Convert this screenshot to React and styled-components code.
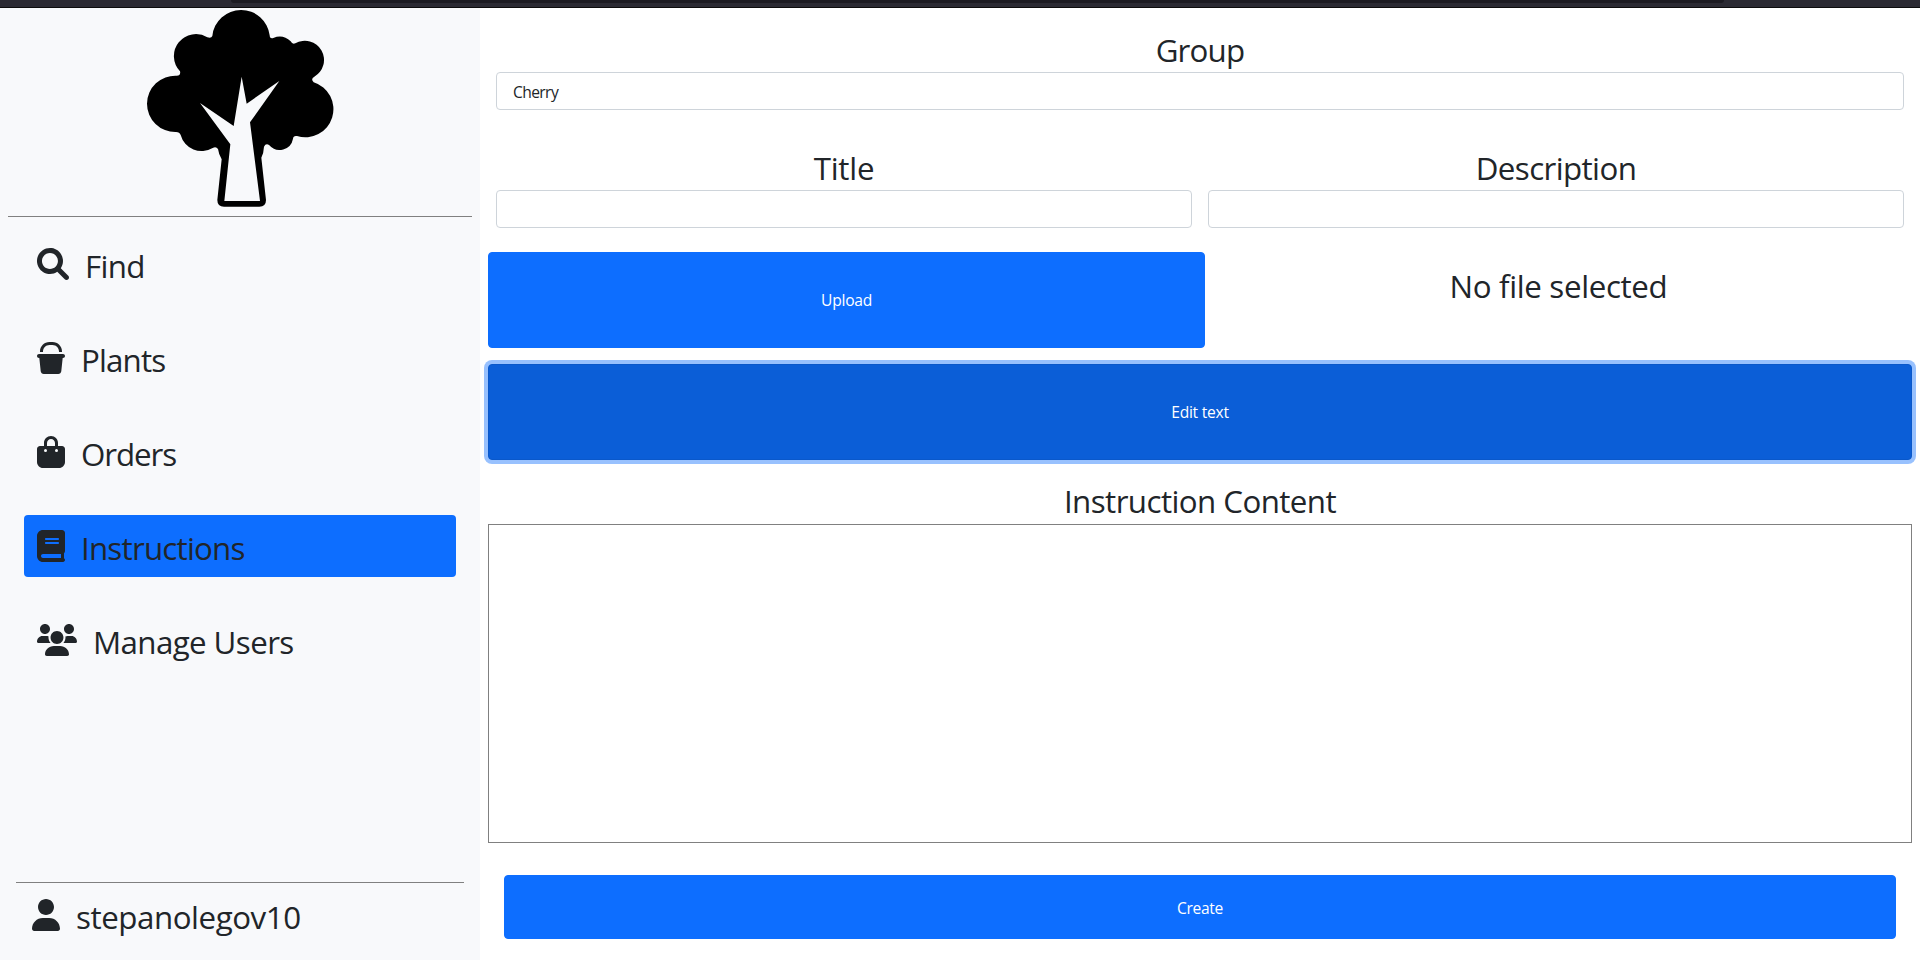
import React from "react";
import styled, { createGlobalStyle, css } from "styled-components";
import { FaBucket, FaBagShopping } from "react-icons/fa6";

const GlobalStyle = createGlobalStyle`
  *, *::before, *::after { box-sizing: border-box; }
  body {
    margin: 0;
    background: #fff;
    color: #212529;
    font-family: "Segoe UI", "Open Sans", "Noto Sans", sans-serif;
    font-size: 16px;
    line-height: 24px;
  }
`;

const Page = styled.div`
  display: flex;
  flex-direction: column;
  height: 960px;
  overflow: hidden;
`;

const BrowserEdge = styled.div`
  flex: none;
  height: 8px;
  padding: 0 196px 0 231px;
  background: #2b2a33;
  border-bottom: 1px solid #0c0c0d;
`;

const AddressBar = styled.div`
  height: 3px;
  background: #1c1b22;
  border-radius: 0 0 3px 3px;
`;

const Columns = styled.div`
  display: flex;
  flex: 1;
  min-height: 0;
`;

const Sidebar = styled.aside`
  display: flex;
  flex-direction: column;
  flex: none;
  width: 480px;
  background: #f8f9fb;
`;

const LogoArea = styled.div`
  display: flex;
  justify-content: center;
  height: 209px;
  margin: 0 8px;
  border-bottom: 1px solid #808080;
`;

const Nav = styled.nav`
  display: flex;
  flex-direction: column;
  gap: 32px;
  padding: 16px 24px;
`;

const NavItem = styled.a`
  display: flex;
  gap: 16px;
  height: 62px;
  padding: 15px 13px 0;
  border-radius: 4px;
  background: ${(p) => (p.$active ? "#0d6eff" : "transparent")};
`;

const IconBox = styled.span`
  flex: none;
  width: ${(p) => p.$width}px;
  height: 32px;

  svg {
    display: block;
    width: 100%;
    height: 100%;
  }
`;

const Label = styled.span`
  font-size: 31.3px;
  line-height: 36px;
  white-space: nowrap;
  letter-spacing: ${(p) => p.$tracking || 0}px;
`;

const UserBar = styled.footer`
  display: flex;
  gap: 16px;
  height: 78px;
  margin: auto 16px 0;
  padding: 16px 16px 0;
  border-top: 1px solid #808080;
`;

const Main = styled.main`
  display: flex;
  flex-direction: column;
  flex: 1;
  padding: 16px 8px 21px;
`;

const FieldRow = styled.div`
  display: flex;
  gap: 16px;
  padding: 0 8px;
  margin-bottom: ${(p) => p.$after}px;
`;

const Field = styled.label`
  display: flex;
  flex-direction: column;
  flex: 1;
`;

const Heading = styled.span`
  flex: none;
  height: 48px;
  padding-top: 6px;
  font-size: 31.3px;
  line-height: 40px;
  text-align: center;
  white-space: nowrap;
  letter-spacing: ${(p) => p.$tracking || 0}px;
`;

const SectionHeading = styled(Heading)`
  margin-top: 16px;
  padding-top: 5px;
`;

const Input = styled.input`
  width: 100%;
  height: 38px;
  padding: 8px 16px 6px;
  border: 1px solid #ced4da;
  border-radius: 4px;
  background: #fff;
  color: #212529;
  font: inherit;
  font-size: 15.6px;
  letter-spacing: -0.6px;
  outline: none;
`;

const Button = styled.button`
  flex: none;
  height: 96px;
  width: ${(p) => p.$width || "auto"};
  padding: 0;
  border: 1px solid #0d6eff;
  border-radius: 4px;
  background: #0d6eff;
  color: #fff;
  font: inherit;
  font-size: 15.6px;
  letter-spacing: -0.25px;
  ${(p) =>
    p.$focused &&
    css`
      border-color: #0a58ca;
      background: #0b5ed7;
      box-shadow: 0 0 0 4px #98c1fe;
    `}
`;

const SubmitButton = styled(Button)`
  height: 64px;
  padding-top: 1px;
  letter-spacing: -0.35px;
`;

const UploadRow = styled.div`
  display: flex;
  margin-bottom: 16px;
`;

const FileStatus = styled.div`
  display: flex;
  flex-direction: column;
  flex: 1;
  padding-top: 8px;
`;

const Content = styled.div`
  flex: none;
  height: 319px;
  margin-bottom: 32px;
  border: 1px solid #808080;
  background: #fff;
`;

const Actions = styled.div`
  display: flex;
  flex-direction: column;
  padding: 0 16px;
`;

const TreeLogo = () => (
  <svg width="200" height="200" viewBox="30 24 600 600">
    <path d="M247 108A86 86 0 0 1 333 30A86 86 0 0 1 419 106Q419 117 430 114Q459 102 482 124Q487 134 496 130A57 57 0 0 1 553 230Q541 237 551 247A83 83 0 0 1 501 408Q490 406 489 416A41 41 0 0 1 418 436Q408 428 402 440Q401 460 394 473L408 600Q408 620 388 620L282 620Q262 620 262 600L275 478Q266 462 264 447Q258 438 248 444A65 65 0 0 1 152 405Q149 396 138 396A85 85 0 0 1 51 311A85 85 0 0 1 140 227Q153 227 150 214A66 66 0 0 1 232 112Q244 116 247 108Z" />
    <path
      fill="#f8f9fb"
      d="M283 603L301 433L210 309L311 378L335 230L350 311L448 243L360 367L390 603Z"
    />
  </svg>
);

const SearchIcon = () => (
  <svg viewBox="0 0 512 512" fill="currentColor">
    <path d="M500.3 443.7l-119.7-119.7c27.22-40.41 40.65-90.9 33.46-144.7C401.8 87.79 326.8 13.32 235.2 1.723C99.01-15.51-15.51 99.01 1.724 235.2c11.6 91.64 86.08 166.7 177.6 178.9c53.8 7.189 104.3-6.236 144.7-33.46l119.7 119.7c15.62 15.62 40.95 15.62 56.57 0C515.9 484.7 515.9 459.3 500.3 443.7zM79.1 208c0-70.58 57.42-128 128-128s128 57.42 128 128c0 70.58-57.42 128-128 128S79.1 278.6 79.1 208z" />
  </svg>
);

const BookIcon = () => (
  <svg viewBox="0 0 448 512" fill="currentColor">
    <path d="M448 336v-288C448 21.49 426.5 0 400 0H96C42.98 0 0 42.98 0 96v320c0 53.02 42.98 96 96 96h320c17.67 0 32-14.33 32-31.1c0-11.72-6.607-21.52-16-27.1v-81.36C441.8 362.8 448 350.3 448 336zM143.1 128h192C344.8 128 352 135.2 352 144C352 152.8 344.8 160 336 160H143.1C135.2 160 128 152.8 128 144C128 135.2 135.2 128 143.1 128zM143.1 192h192C344.8 192 352 199.2 352 208C352 216.8 344.8 224 336 224H143.1C135.2 224 128 216.8 128 208C128 199.2 135.2 192 143.1 192zM384 448H96c-17.67 0-32-14.33-32-32c0-17.67 14.33-32 32-32h288V448z" />
  </svg>
);

const UsersIcon = () => (
  <svg viewBox="0 0 640 512" fill="currentColor">
    <path d="M319.9 320c57.41 0 103.1-46.56 103.1-104c0-57.44-46.54-104-103.1-104c-57.41 0-103.1 46.56-103.1 104C215.9 273.4 262.5 320 319.9 320zM369.9 352H270.1C191.6 352 128 411.7 128 485.3C128 500.1 140.7 512 156.4 512h327.2C499.3 512 512 500.1 512 485.3C512 411.7 448.4 352 369.9 352zM512 160c44.18 0 80-35.82 80-80S556.2 0 512 0c-44.18 0-80 35.82-80 80S467.8 160 512 160zM183.9 216c0-5.449 .9824-10.63 1.609-15.91C174.6 194.1 162.6 192 149.9 192H88.08C39.44 192 0 233.8 0 285.3C0 295.6 7.887 304 17.62 304h199.5C196.7 280.2 183.9 249.7 183.9 216zM128 160c44.18 0 80-35.82 80-80S172.2 0 128 0C83.82 0 48 35.82 48 80S83.82 160 128 160zM551.9 192h-61.84c-12.8 0-24.88 3.037-35.86 8.24C454.8 205.5 455.8 210.6 455.8 216c0 33.71-12.78 64.21-33.16 88h199.7C632.1 304 640 295.6 640 285.3C640 233.8 600.6 192 551.9 192z" />
  </svg>
);

const UserIcon = () => (
  <svg viewBox="0 0 448 512" fill="currentColor">
    <path d="M224 256c70.7 0 128-57.31 128-128s-57.3-128-128-128C153.3 0 96 57.31 96 128S153.3 256 224 256zM274.7 304H173.3C77.61 304 0 381.6 0 477.3c0 19.14 15.52 34.67 34.66 34.67h378.7C432.5 512 448 496.5 448 477.3C448 381.6 370.4 304 274.7 304z" />
  </svg>
);

const navItems = [
  { label: "Find", icon: SearchIcon, width: 32, tracking: -0.7 },
  { label: "Plants", icon: FaBucket, width: 28, tracking: -0.85 },
  { label: "Orders", icon: FaBagShopping, width: 28, tracking: -1.1 },
  { label: "Instructions", icon: BookIcon, width: 28, tracking: -0.78 },
  { label: "Manage Users", icon: UsersIcon, width: 40, tracking: -0.6 },
];

export default function App() {
  return (
    <Page>
      <GlobalStyle />
      <BrowserEdge>
        <AddressBar />
      </BrowserEdge>
      <Columns>
        <Sidebar>
          <LogoArea>
            <TreeLogo />
          </LogoArea>
          <Nav>
            {navItems.map(({ label, icon: Icon, width, tracking }) => (
              <NavItem key={label} $active={label === "Instructions"}>
                <IconBox $width={width}>
                  <Icon />
                </IconBox>
                <Label $tracking={tracking}>{label}</Label>
              </NavItem>
            ))}
          </Nav>
          <UserBar>
            <IconBox $width={28}>
              <UserIcon />
            </IconBox>
            <Label $tracking={-0.45}>stepanolegov10</Label>
          </UserBar>
        </Sidebar>
        <Main>
          <FieldRow $after={32}>
            <Field>
              <Heading $tracking={-0.8}>Group</Heading>
              <Input defaultValue="Cherry" />
            </Field>
          </FieldRow>
          <FieldRow $after={24}>
            <Field>
              <Heading $tracking={-0.25}>Title</Heading>
              <Input />
            </Field>
            <Field>
              <Heading $tracking={-0.6}>Description</Heading>
              <Input />
            </Field>
          </FieldRow>
          <UploadRow>
            <Button $width="717px">Upload</Button>
            <FileStatus>
              <Heading $tracking={-0.35}>No file selected</Heading>
            </FileStatus>
          </UploadRow>
          <Button $focused>Edit text</Button>
          <SectionHeading $tracking={-0.57}>Instruction Content</SectionHeading>
          <Content />
          <Actions>
            <SubmitButton>Create</SubmitButton>
          </Actions>
        </Main>
      </Columns>
    </Page>
  );
}
